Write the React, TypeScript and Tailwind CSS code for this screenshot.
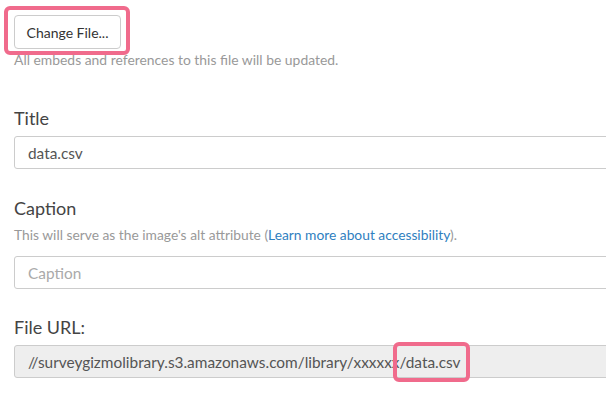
export default function App() {
  return (
    <div className="relative h-[396px] w-[606px] overflow-hidden bg-white font-['Lato','Liberation_Sans',sans-serif] text-[#333]">
      <div className="pl-[14px] pt-[15px]">
        {/* Change file */}
        <button className="h-[34px] w-[107px] rounded-[4px] border border-[#ccc] bg-white text-[14px] text-[#333]">
          Change File...
        </button>
        <p className="mt-[2px] text-[13.9px] leading-[17px] text-[#999]">
          All embeds and references to this file will be updated.
        </p>

        {/* Title */}
        <label className="mt-[38px] block text-[18px] leading-[24px] text-[#444]">Title</label>
        <input
          readOnly
          value="data.csv"
          className="mt-[6px] block h-[33px] w-[600px] rounded-[3px] border border-[#ccc] bg-white px-[13px] text-[15.4px] text-[#555] outline-none"
        />

        {/* Caption */}
        <label className="mt-[27px] block text-[18px] leading-[24px] text-[#444]">Caption</label>
        <p className="mt-[7px] text-[13.8px] leading-[16px] text-[#999]">
          This will serve as the image's alt attribute (
          <a className="text-[#2f80c0]">Learn more about accessibility</a>).
        </p>
        <input
          readOnly
          placeholder="Caption"
          className="mt-[13px] block h-[33px] w-[600px] rounded-[3px] border border-[#ccc] bg-white px-[13px] text-[15.4px] text-[#555] outline-none placeholder:text-[#aaa]"
        />

        {/* File URL */}
        <label className="mt-[26px] block text-[18px] leading-[24px] text-[#444]">File URL:</label>
        <input
          readOnly
          value="//surveygizmolibrary.s3.amazonaws.com/library/xxxxxx/data.csv"
          className="mt-[6px] block h-[33px] w-[600px] rounded-[3px] border border-[#ccc] bg-[#eee] px-[13px] text-[15.4px] text-[#555] outline-none"
        />
      </div>

      {/* highlight boxes */}
      <div className="absolute left-[4px] top-[6px] h-[49px] w-[126px] rounded-[6px] border-[4px] border-[#f06b8c]" />
      <div className="absolute left-[393px] top-[342px] h-[40px] w-[77px] rounded-[6px] border-[4px] border-[#f06b8c]" />
    </div>
  )
}
